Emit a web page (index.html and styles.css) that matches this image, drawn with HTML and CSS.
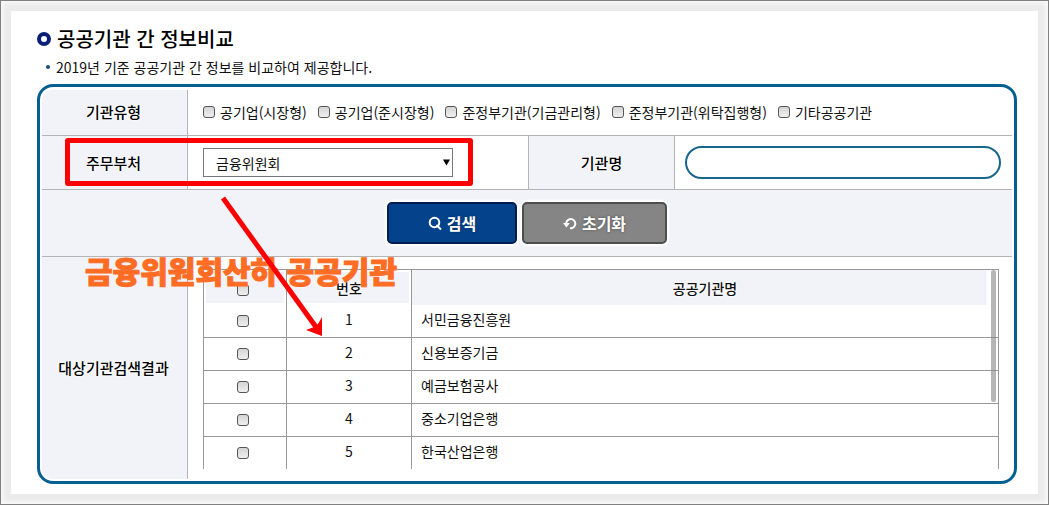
FILE: index.html
```html
<!DOCTYPE html>
<html lang="ko">
<head>
    <meta charset="UTF-8">
    <meta name="viewport" content="width=device-width, initial-scale=1.0">
    <title>공공기관 간 정보비교</title>
    <link rel="stylesheet" href="styles.css">
</head>
<body>
    <main class="card">
        <h1 class="tit">공공기관 간 정보비교</h1>
        <p class="desc">2019년 기준 공공기관 간 정보를 비교하여 제공합니다.</p>

        <form class="panel">
            <!-- 1. 기관유형 -->
            <div class="row row-type">
                <div class="th">기관유형</div>
                <div class="td checks">
                    <label><input type="checkbox" class="chk">공기업(시장형)</label>
                    <label><input type="checkbox" class="chk">공기업(준시장형)</label>
                    <label><input type="checkbox" class="chk">준정부기관(기금관리형)</label>
                    <label><input type="checkbox" class="chk">준정부기관(위탁집행형)</label>
                    <label><input type="checkbox" class="chk">기타공공기관</label>
                </div>
            </div>

            <!-- 2. 주무부처, 기관명 -->
            <div class="row row-dept">
                <label class="th" for="dept">주무부처</label>
                <div class="td">
                    <div class="sel">
                        <select id="dept">
                            <option>금융위원회</option>
                        </select>
                        <svg class="arr" viewBox="0 0 8 7" aria-hidden="true">
                            <polygon points="0,0 8,0 4,7"></polygon>
                        </svg>
                    </div>
                </div>
                <label class="th th-name" for="org">기관명</label>
                <div class="td td-name">
                    <input type="text" id="org" class="txt">
                </div>
            </div>

            <!-- 3. 버튼 -->
            <div class="row row-btn">
                <button type="button" class="btn search">
                    <svg viewBox="0 0 14 14" aria-hidden="true">
                        <circle cx="6.5" cy="6.5" r="4.8"></circle>
                        <path d="M8.5 9 L13 13.5"></path>
                    </svg>
                    검색
                </button>
                <button type="reset" class="btn reset">
                    <svg viewBox="0 0 14 14" aria-hidden="true">
                        <path d="M3.2 8.5 A4.6 4.6 0 1 1 7 12.2"></path>
                        <path class="head" d="M0 7 H6.8 L3.4 11.5 Z"></path>
                    </svg>
                    초기화
                </button>
            </div>

            <!-- 4. 검색결과 -->
            <div class="row row-result">
                <div class="th">대상기관검색결과</div>
                <div class="td">
                    <div class="list">
                        <table>
                            <colgroup>
                                <col class="col-chk">
                                <col class="col-num">
                                <col>
                            </colgroup>
                            <thead>
                                <tr>
                                    <th><input type="checkbox" class="chk" aria-label="전체 선택"></th>
                                    <th>번호</th>
                                    <th>공공기관명</th>
                                </tr>
                            </thead>
                            <tbody>
                                <tr>
                                    <td><input type="checkbox" class="chk" aria-label="서민금융진흥원"></td>
                                    <td>1</td>
                                    <td>서민금융진흥원</td>
                                </tr>
                                <tr>
                                    <td><input type="checkbox" class="chk" aria-label="신용보증기금"></td>
                                    <td>2</td>
                                    <td>신용보증기금</td>
                                </tr>
                                <tr>
                                    <td><input type="checkbox" class="chk" aria-label="예금보험공사"></td>
                                    <td>3</td>
                                    <td>예금보험공사</td>
                                </tr>
                                <tr>
                                    <td><input type="checkbox" class="chk" aria-label="중소기업은행"></td>
                                    <td>4</td>
                                    <td>중소기업은행</td>
                                </tr>
                                <tr>
                                    <td><input type="checkbox" class="chk" aria-label="한국산업은행"></td>
                                    <td>5</td>
                                    <td>한국산업은행</td>
                                </tr>
                            </tbody>
                        </table>
                        <span class="bar"></span>
                    </div>
                </div>
            </div>
        </form>
    </main>

    <!-- 설명 표시 : 빨간 박스, 글자, 화살표 -->
    <div class="mark"></div>
    <p class="memo">금융위원회산하 공공기관</p>
    <svg class="pointer" viewBox="0 0 110 146" aria-hidden="true">
        <path class="line" d="M8 8 L101 137"></path>
        <polygon points="107,146 91,140 99,137 103,134 107,127"></polygon>
    </svg>
</body>
</html>
```

FILE: styles.css
```css
*,
*::before{
    box-sizing: border-box;
}
body{
    position: relative;
    display: flex;
    min-height: 100vh;
    margin: 0;
    padding: 10px;
    border: 1px solid #808080;
    background: #ebebeb;
    box-shadow: inset 0 0 6px 1px #fff;
    font: 14px/20px "Noto Sans CJK KR", sans-serif;
    color: #111;
}
.card{
    flex: 1;
    padding: 12px 21px 10px 26px;
    background: #fff;
}

/* 제목 */
.tit{
    display: flex;
    align-items: center;
    gap: 6px;
    margin: 0;
    font-size: 20px;
    line-height: 32px;
    font-weight: 500;
    color: #000;
}
.tit::before{
    content: "";
    width: 14px;
    height: 14px;
    border: 4px solid #0a1f78;
    border-radius: 50%;
}
.desc{
    display: flex;
    align-items: center;
    gap: 6px;
    margin: 0;
    padding: 0 0 5px 9px;
    line-height: 24px;
}
.desc::before{
    content: "";
    width: 4px;
    height: 4px;
    border-radius: 50%;
    background: #1b4a7c;
}

/* 검색 박스 */
.panel{
    padding: 3px 2px 2px;
    border: 3px solid #05608f;
    border-radius: 16px;
}
.row{
    display: flex;
    border-bottom: 1px solid #b4b4b6;
}
.row-type{
    height: 46px;
}
.row-dept{
    height: 54px;
}
.row-result{
    border-bottom: 0;
}
.th{
    display: flex;
    flex: none;
    align-items: center;
    justify-content: center;
    width: 146px;
    padding-right: 2px;
    border-right: 1px solid #b4b4b6;
    background: #f2f3f8;
    font-size: 15px;
    font-weight: 500;
    color: #000;
    text-shadow: 0 0 3px #fff, 0 0 3px #fff;
}
.th-name{
    width: 147px;
    padding-right: 0;
    border-left: 1px solid #b4b4b6;
}
.row-type .th{
    border-top-left-radius: 10px;
}
.row-type .th,
.row-type .td{
    padding-bottom: 2px;
}
.row-result .th{
    border-bottom-left-radius: 10px;
}
.td{
    display: flex;
    flex: 1;
    align-items: center;
    padding-left: 15px;
}
.td-name{
    flex: 0 1 337px;
    padding: 0 11px 0 10px;
}
.checks{
    gap: 11px;
}
.checks label{
    display: flex;
    align-items: center;
    gap: 5px;
    white-space: nowrap;
}

/* 체크박스 */
.chk{
    appearance: none;
    width: 12px;
    height: 12px;
    margin: 0;
    border: 1px solid #555;
    border-radius: 3px;
    background: linear-gradient(#d4d4d4, #efefef);
    vertical-align: middle;
}
.chk:checked{
    background: #05608f;
}

/* 셀렉트 */
.sel{
    display: grid;
    align-items: center;
    width: 250px;
}
.sel select{
    grid-area: 1 / 1;
    appearance: none;
    height: 29px;
    padding: 0 12px;
    border: 1px solid #777;
    border-radius: 0;
    background: #fff;
    font: inherit;
    color: inherit;
}
.arr{
    grid-area: 1 / 1;
    justify-self: end;
    width: 7px;
    height: 7px;
    margin-right: 3px;
    pointer-events: none;
}
.txt{
    width: 100%;
    height: 33px;
    padding: 0 16px;
    border: 2px solid #17668c;
    border-radius: 17px;
    background: #fff;
    font: inherit;
}

/* 버튼 */
.row-btn{
    justify-content: center;
    gap: 5px;
    padding: 12px 0;
    background: #f2f3f8;
}
.btn{
    display: flex;
    align-items: center;
    justify-content: center;
    gap: 5px;
    width: 130px;
    height: 42px;
    padding: 0;
    border: 2px solid #001c50;
    border-radius: 5px;
    background: #04438c;
    box-shadow: 0 0 2px 2px #fff;
    font: bold 16px/20px "Noto Sans CJK KR", sans-serif;
    color: #fff;
    text-shadow: 0 0 3px #0006;
}
.reset{
    width: 145px;
    border-color: #4e4e4e;
    background: #858585;
}
.btn svg{
    width: 14px;
    height: 14px;
    fill: none;
    stroke: #fff;
    stroke-width: 2;
}
.btn svg .head{
    fill: #fff;
    stroke: none;
}

/* 결과 목록 */
.row-result .td{
    padding: 12px 13px 10px 15px;
}
.list{
    position: relative;
    flex: 1;
    border: 1px solid #98989a;
    border-bottom: 0;
}
.list table{
    width: 100%;
    table-layout: fixed;
    border-spacing: 0;
}
.col-chk{
    width: 83px;
}
.col-num{
    width: 125px;
}
.list th,
.list td{
    height: 33px;
    padding: 0 0 4px;
    border-right: 1px solid #98989a;
    border-bottom: 1px solid #98989a;
    text-align: center;
}
.list th{
    padding: 0;
    border-bottom: 0;
    background: #f2f3f8;
    box-shadow: inset 0 0 0 2px #fff;
    font-weight: 500;
    text-shadow: 0 0 3px #fff, 0 0 3px #fff;
}
.list th:last-child{
    box-shadow: inset -11px 0 0 #fff;
}
.list th:last-child,
.list td:last-child{
    border-right: 0;
}
.list td:last-child{
    padding-left: 9px;
    text-align: left;
}
.list tr:last-child td{
    height: 32px;
    border-bottom: 0;
}
.list thead tr th{
    height: 35px;
}
.list .chk{
    margin-right: 4px;
}
/* 스크롤바 */
.bar{
    position: absolute;
    top: 0;
    right: 2px;
    width: 5px;
    height: 132px;
    border-radius: 3px;
    background: #8888889c;
}

/* 설명 표시 */
.mark{
    position: absolute;
    top: 137px;
    left: 64px;
    width: 408px;
    height: 48px;
    border: 5px solid #fc0000;
    border-radius: 3px;
    pointer-events: none;
}
.memo{
    position: absolute;
    top: 249px;
    left: 84px;
    margin: 0;
    font-size: 30px;
    line-height: 40px;
    font-weight: 900;
    color: #ff6c23;
    -webkit-text-stroke: 1px #ff6c23;
    white-space: nowrap;
}
.pointer{
    position: absolute;
    top: 189px;
    left: 214px;
    width: 110px;
    height: 146px;
    fill: #fc0000;
    pointer-events: none;
}
.pointer .line{
    fill: none;
    stroke: #fc0000;
    stroke-width: 5;
}
```
